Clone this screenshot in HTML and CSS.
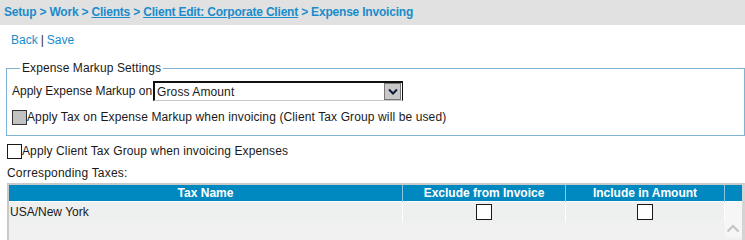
FILE: index.html
```html
<!DOCTYPE html>
<html>
<head>
<meta charset="utf-8">
<link rel="stylesheet" href="styles.css">
</head>
<body>
<div class="crumbs">Setup &gt; Work &gt; <a href="#">Clients</a> &gt; <a href="#">Client Edit: Corporate Client</a> &gt; Expense Invoicing</div>
<div class="actions"><a href="#">Back</a><span class="sep">|</span><a href="#">Save</a></div>
<fieldset class="markup">
  <legend>Expense Markup Settings</legend>
  <div class="row">
    <span class="label">Apply Expense Markup on</span>
    <div class="select">
      <span class="value">Gross Amount</span>
      <span class="drop"><svg width="10" height="7" viewBox="0 0 10 7"><path d="M1 1.5 L5 5.5 L9 1.5" fill="none" stroke="#0d1a3a" stroke-width="2"/></svg></span>
    </div>
  </div>
  <div class="row check-row">
    <span class="box grey"></span><span class="txt">Apply Tax on Expense Markup when invoicing (Client Tax Group will be used)</span>
  </div>
</fieldset>
<div class="row outer-check">
  <span class="box"></span><span class="txt">Apply Client Tax Group when invoicing Expenses</span>
</div>
<div class="corr">Corresponding Taxes:</div>
<div class="grid">
  <table>
    <thead>
      <tr><th class="c-name">Tax Name</th><th class="c-ex">Exclude from Invoice</th><th class="c-in">Include in Amount</th><th class="c-sc"></th></tr>
    </thead>
    <tbody>
      <tr class="data"><td class="name">USA/New York</td><td class="mid"><span class="box"></span></td><td class="mid"><span class="box"></span></td><td class="sc"></td></tr>
      <tr class="filler"><td colspan="3"></td><td class="sc"><svg width="14" height="9" viewBox="0 0 14 9"><path d="M1.5 7.5 L7 2 L12.5 7.5" fill="none" stroke="#c4c4c4" stroke-width="2.2"/></svg></td></tr>
    </tbody>
  </table>
</div>
</body>
</html>
```

FILE: styles.css
```css
html, body {
  margin: 0;
  padding: 0;
  background: #ffffff;
  font-family: "Liberation Sans", Arial, sans-serif;
  font-size: 12px;
  color: #1a1a1a;
}
a {
  color: #1a8ccc;
  text-decoration: none;
}
.crumbs {
  height: 25px;
  line-height: 25px;
  background: #e1e1e1;
  padding-left: 4px;
  font-weight: bold;
  color: #1a8ccc;
  white-space: nowrap;
  letter-spacing: -0.2px;
}
.crumbs a {
  text-decoration: underline;
}
.actions {
  margin-top: 8px;
  padding-left: 11px;
  line-height: 14px;
  height: 14px;
}
.actions .sep {
  color: #3a2a10;
  margin: 0 3px 0 3px;
}
.markup {
  margin: 14px 0 0 6px;
  padding: 0 0 10px 5px;
  border: 1px solid #7fb3d3;
  min-width: 0;
}
.markup legend {
  margin-left: 8px;
  padding: 0 2px;
  line-height: 14px;
  color: #1a1a1a;
  letter-spacing: 0.1px;
}
.row {
  display: flex;
  align-items: center;
}
.markup .row:first-of-type {
  margin-top: 6px;
}
.label {
  line-height: 20px;
}
.txt {
  letter-spacing: 0.12px;
}
.select {
  margin-left: 1px;
  width: 250px;
  height: 20px;
  box-sizing: border-box;
  border-top: 2px solid #111;
  border-left: 2px solid #111;
  border-right: 1px solid #111;
  border-bottom: 1px solid #c8c8c8;
  display: flex;
  align-items: center;
  justify-content: space-between;
}
.select .value {
  padding-left: 2px;
  letter-spacing: 0.1px;
}
.select .drop {
  width: 15px;
  height: 15px;
  margin-right: 1px;
  background: #c8c8c8;
  border: 1px solid #777;
  display: flex;
  align-items: center;
  justify-content: center;
}
.check-row {
  margin-top: 8px;
  height: 16px;
}
.box {
  display: inline-block;
  width: 13px;
  height: 13px;
  border: 1px solid #1a1a1a;
  background: #fff;
  flex: none;
}
.box.grey {
  background: #c2c2c2;
  border-color: #333;
}
.outer-check {
  margin: 7px 0 0 7px;
  height: 16px;
}
.corr {
  margin: 7px 0 0 7px;
  line-height: 14px;
  letter-spacing: 0.2px;
}
.grid {
  margin: 3px 0 0 7px;
  border-top: 2px solid #c9c9c9;
  border-left: 2px solid #c9c9c9;
  border-right: 3px solid #d4d4d4;
  height: 60px;
  background: #f1f1f1;
}
table {
  width: 100%;
  border-collapse: collapse;
  table-layout: fixed;
}
th {
  background: #0089c1;
  color: #fff;
  font-weight: bold;
  height: 16px;
  padding: 0;
  line-height: 16px;
  border-left: 1px solid #8cc6e0;
}
th.c-name { width: 393px; border-left: none; }
th.c-ex { width: 162px; }
th.c-in { width: 158px; }
th.c-sc { width: auto; }
td {
  padding: 0;
}
tr.data td {
  background: #eeefef;
  height: 20px;
  border-left: 1px solid #ffffff;
  border-top: 1px solid #ffffff;
}
tr.data td.name {
  border-left: none;
  padding-left: 1px;
}
tr.data td.mid {
  text-align: center;
}
tr.data td.mid .box {
  vertical-align: middle;
  width: 14px;
  height: 14px;
}
tr.data td.sc {
  background: #f6f6f6;
}
tr.filler td {
  height: 13px;
  background: #f1f1f1;
}
tr.filler td.sc {
  background: #f6f6f6;
  text-align: center;
  vertical-align: top;
  line-height: 0;
  padding-top: 2px;
}
```
